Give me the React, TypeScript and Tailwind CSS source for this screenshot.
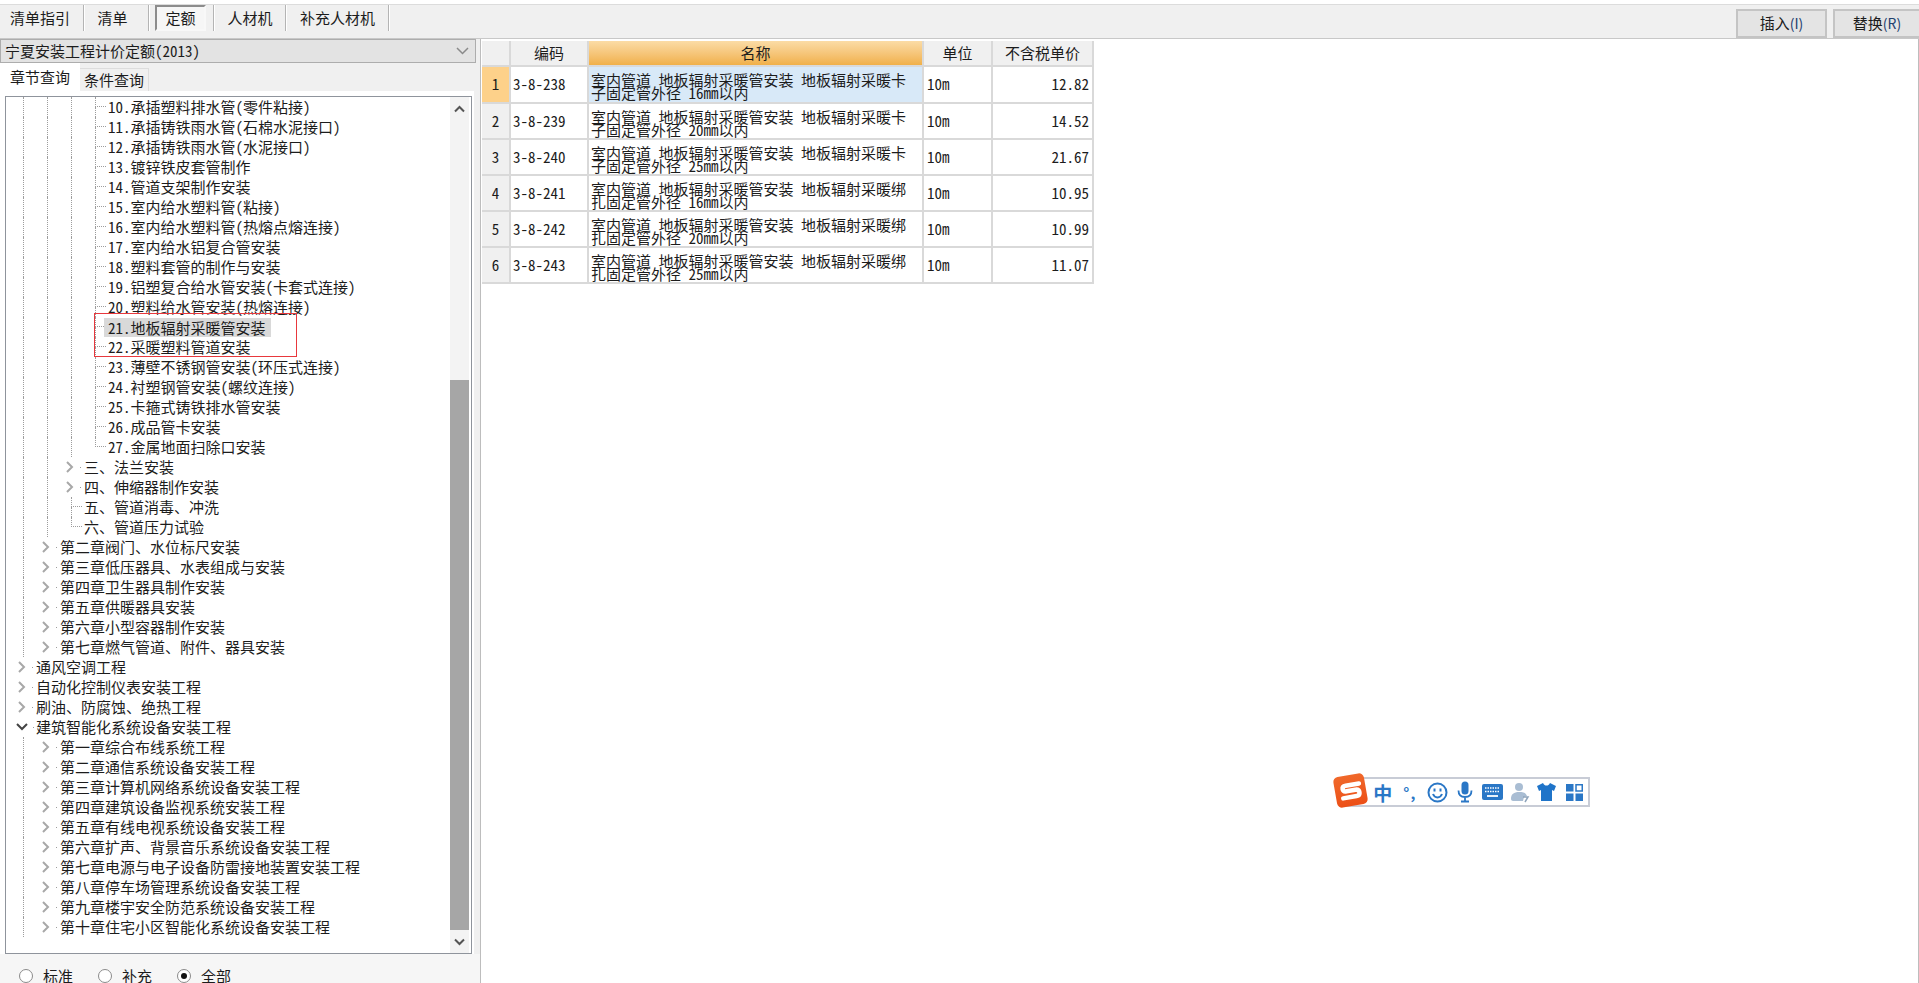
type TreeRow = {
  label: string;
  depth: number;
  kind: 'leaf' | 'closed' | 'open';
  last?: boolean;
  active?: boolean;
};

const leaf = (label: string, extra: Partial<TreeRow> = {}): TreeRow => ({ label, depth: 3, kind: 'leaf', ...extra });
const closed = (label: string, depth: number): TreeRow => ({ label, depth, kind: 'closed' });

const treeRows: TreeRow[] = [
  leaf('10.承插塑料排水管(零件粘接)'),
  leaf('11.承插铸铁雨水管(石棉水泥接口)'),
  leaf('12.承插铸铁雨水管(水泥接口)'),
  leaf('13.镀锌铁皮套管制作'),
  leaf('14.管道支架制作安装'),
  leaf('15.室内给水塑料管(粘接)'),
  leaf('16.室内给水塑料管(热熔点熔连接)'),
  leaf('17.室内给水铝复合管安装'),
  leaf('18.塑料套管的制作与安装'),
  leaf('19.铝塑复合给水管安装(卡套式连接)'),
  leaf('20.塑料给水管安装(热熔连接)'),
  leaf('21.地板辐射采暖管安装', { active: true }),
  leaf('22.采暖塑料管道安装'),
  leaf('23.薄壁不锈钢管安装(环压式连接)'),
  leaf('24.衬塑钢管安装(螺纹连接)'),
  leaf('25.卡箍式铸铁排水管安装'),
  leaf('26.成品管卡安装'),
  leaf('27.金属地面扫除口安装', { last: true }),
  closed('三、法兰安装', 2),
  closed('四、伸缩器制作安装', 2),
  { label: '五、管道消毒、冲洗', depth: 2, kind: 'leaf' },
  { label: '六、管道压力试验', depth: 2, kind: 'leaf', last: true },
  closed('第二章阀门、水位标尺安装', 1),
  closed('第三章低压器具、水表组成与安装', 1),
  closed('第四章卫生器具制作安装', 1),
  closed('第五章供暖器具安装', 1),
  closed('第六章小型容器制作安装', 1),
  closed('第七章燃气管道、附件、器具安装', 1),
  closed('通风空调工程', 0),
  closed('自动化控制仪表安装工程', 0),
  closed('刷油、防腐蚀、绝热工程', 0),
  { label: '建筑智能化系统设备安装工程', depth: 0, kind: 'open' },
  closed('第一章综合布线系统工程', 1),
  closed('第二章通信系统设备安装工程', 1),
  closed('第三章计算机网络系统设备安装工程', 1),
  closed('第四章建筑设备监视系统安装工程', 1),
  closed('第五章有线电视系统设备安装工程', 1),
  closed('第六章扩声、背景音乐系统设备安装工程', 1),
  closed('第七章电源与电子设备防雷接地装置安装工程', 1),
  closed('第八章停车场管理系统设备安装工程', 1),
  closed('第九章楼宇安全防范系统设备安装工程', 1),
  closed('第十章住宅小区智能化系统设备安装工程', 1),
];

const quotaRows = [
  { id: 1, code: '3-8-238', name: '室内管道 地板辐射采暖管安装 地板辐射采暖卡子固定管外径 16mm以内', unit: '10m', price: '12.82' },
  { id: 2, code: '3-8-239', name: '室内管道 地板辐射采暖管安装 地板辐射采暖卡子固定管外径 20mm以内', unit: '10m', price: '14.52' },
  { id: 3, code: '3-8-240', name: '室内管道 地板辐射采暖管安装 地板辐射采暖卡子固定管外径 25mm以内', unit: '10m', price: '21.67' },
  { id: 4, code: '3-8-241', name: '室内管道 地板辐射采暖管安装 地板辐射采暖绑扎固定管外径 16mm以内', unit: '10m', price: '10.95' },
  { id: 5, code: '3-8-242', name: '室内管道 地板辐射采暖管安装 地板辐射采暖绑扎固定管外径 20mm以内', unit: '10m', price: '10.99' },
  { id: 6, code: '3-8-243', name: '室内管道 地板辐射采暖管安装 地板辐射采暖绑扎固定管外径 25mm以内', unit: '10m', price: '11.07' },
];

function Separator() {
  return <div className="h-[26px] w-[2px] border-l border-[#b4b4b4] bg-white" />;
}

function ChevronRight() {
  return (
    <svg width="10" height="12" viewBox="0 0 10 12" fill="none" className="-ml-[6px] shrink-0">
      <path d="M2 1l5 5-5 5" stroke="#a8a8a8" strokeWidth="2" />
    </svg>
  );
}

function ChevronDown() {
  return (
    <svg width="12" height="8" viewBox="0 0 12 8" fill="none" className="-ml-[7px] shrink-0">
      <path d="M1 1l5 5 5-5" stroke="#444444" strokeWidth="2" />
    </svg>
  );
}

function TreeItem({ row }: { row: TreeRow }) {
  const guides = Array.from({ length: row.depth }, (_, i) => i);
  return (
    <div className="flex h-5 shrink-0 items-center whitespace-nowrap pl-[17px]">
      {guides.map((g) => (
        <div key={g} className="h-full w-6 shrink-0 border-l border-dotted border-[#9c9c9c]" />
      ))}
      {row.kind === 'leaf' ? (
        <div className="flex h-full w-[14px] shrink-0 flex-col">
          <div className="h-[10px] w-[11px] border-b border-l border-dotted border-[#9c9c9c]" />
          {!row.last && <div className="h-[10px] border-l border-dotted border-[#9c9c9c]" />}
        </div>
      ) : (
        <div className="flex h-full w-[14px] shrink-0 items-center">
          {row.kind === 'open' ? <ChevronDown /> : <ChevronRight />}
          <div className="ml-[5px] h-px w-px shrink-0 bg-[#9c9c9c]" />
        </div>
      )}
      {row.active ? (
        <span className="-ml-[5px] h-[19px] bg-[#d9d9d9] pl-[4px] pr-[5px] leading-5">{row.label}</span>
      ) : (
        <span className="-ml-px leading-5">{row.label}</span>
      )}
    </div>
  );
}

function Radio({ label, checked }: { label: string; checked?: boolean }) {
  return (
    <div className="flex items-center gap-[10px]">
      <div className="flex h-[14px] w-[14px] items-center justify-center rounded-full border border-[#8a8a8a] bg-white">
        {checked && <div className="h-[6px] w-[6px] rounded-full bg-[#111111]" />}
      </div>
      <span>{label}</span>
    </div>
  );
}

function SogouBar() {
  return (
    <div className="absolute left-[1346px] top-[777px] flex h-[30px] w-[244px] items-center border-2 border-[#c8ccd6] bg-white pl-[21px] text-[#2a77c6]">
      <div className="absolute -left-[13px] -top-[4px] flex h-[31px] w-[31px] -rotate-[10deg] items-center justify-center rounded-[5px] bg-gradient-to-b from-[#f0682a] to-[#ec4f16]">
        <svg width="24" height="20" viewBox="0 0 24 20" fill="none">
          <path d="M21 4H7.5C5 4 4 5 4 6.8S5 9.6 7.5 9.6h9C19 9.6 20 11 20 12.9S19 16 16.5 16H3" stroke="white" strokeWidth="4.5" strokeLinecap="round" />
        </svg>
      </div>
      <div className="flex w-[27.5px] justify-center text-[19px] font-bold leading-none">中</div>
      <div className="flex w-[27.5px] justify-center text-[15px] font-bold leading-none">°,</div>
      <div className="flex w-[27.5px] justify-center">
        <svg width="21" height="21" viewBox="0 0 21 21" fill="none" stroke="#2a77c6" strokeWidth="2">
          <circle cx="10.5" cy="10.5" r="9" />
          <path d="M6 12c1 2.5 3 3.5 4.5 3.5S14 14.500 15 12" />
          <path d="M7.500 6.500v3M13.500 6.500v3" />
        </svg>
      </div>
      <div className="flex w-[27.5px] justify-center">
        <svg width="16" height="22" viewBox="0 0 16 22" fill="none">
          <rect x="4.500" y="0.500" width="7" height="13" rx="3.500" fill="#2a77c6" />
          <path d="M1.500 9.500c0 4 2.500 6.500 6.500 6.500s6.500-2.500 6.500-6.500M8 16v4M4 20.500h8" stroke="#2a77c6" strokeWidth="1.800" />
        </svg>
      </div>
      <div className="flex w-[27.5px] justify-center">
        <svg width="21" height="16" viewBox="0 0 21 16">
          <rect width="21" height="16" rx="2" fill="#2a77c6" />
          <path d="M3 4h15M3 7.500h15" stroke="white" strokeWidth="1.500" strokeDasharray="1.500 1" />
          <path d="M5 12h11" stroke="white" strokeWidth="1.800" />
        </svg>
      </div>
      <div className="flex w-[27.5px] justify-center">
        <svg width="20" height="21" viewBox="0 0 20 21">
          <circle cx="9" cy="5" r="4" fill="#a9bdd3" />
          <path d="M1 17c0-5 3-7 8-7s7 1 8 4l-3 1-1 4H3c-1 0-2-1-2-2z" fill="#a9bdd3" />
          <path d="M13 15h5l-3 5" fill="none" stroke="#8fa4bb" strokeWidth="1.500" />
        </svg>
      </div>
      <div className="flex w-[27.5px] justify-center">
        <svg width="19" height="18" viewBox="0 0 19 18">
          <path d="M6 0L0 3l2 5 2-1v11h11V7l2 1 2-5-6-3c-1 2-2 2.500-3.500 2.500S7 2 6 0z" fill="#1f74c9" />
        </svg>
      </div>
      <div className="flex w-[27.5px] justify-center">
        <svg width="17" height="17" viewBox="0 0 17 17">
          <rect width="7.500" height="7.500" fill="#2a77c6" />
          <rect x="10" y="0.750" width="6.250" height="6.250" fill="none" stroke="#2a77c6" strokeWidth="1.500" />
          <rect y="9.500" width="7.500" height="7.500" fill="#2a77c6" />
          <rect x="9.500" y="9.500" width="7.500" height="7.500" fill="#2a77c6" />
        </svg>
      </div>
    </div>
  );
}

export default function App() {
  return (
    <div className="relative flex h-[983px] w-[1919px] flex-col overflow-hidden bg-[#f0f0f0] font-['Noto_Sans_CJK_SC',sans-serif] text-[15px] text-[#1c1c1c] [font-feature-settings:'hwid']">
      <div className="h-[5px] shrink-0 border-b border-[#dcdcdc] bg-white" />

      {/* top toolbar */}
      <div className="flex h-[33px] shrink-0 items-start">
        <div className="flex h-[26px] w-[83px] items-center justify-center pr-[3px]">清单指引</div>
        <Separator />
        <div className="flex h-[26px] w-[63px] items-center justify-center pr-[8px]">清单</div>
        <Separator />
        <div className="ml-[5px] mr-[7px] flex h-[26px] w-[51px] items-center justify-center border-2 border-b-[#f8f8f8] border-l-[#8c8c8c] border-r-[#f8f8f8] border-t-[#8c8c8c] bg-[#f6f6f6]">
          定额
        </div>
        <Separator />
        <div className="flex h-[26px] w-[70px] items-center justify-center">人材机</div>
        <Separator />
        <div className="flex h-[26px] w-[101px] items-center justify-center">补充人材机</div>
        <Separator />
        <div className="ml-auto flex gap-[6px] pt-[4px]">
          <button className="flex h-[29px] w-[91px] items-center justify-center border-2 border-[#c4c4c4] bg-[#e4e4e4]">
            插入<span className="text-[14px] text-[#23406f] [font-feature-settings:normal]">(I)</span>
          </button>
          <button className="flex h-[29px] w-[86px] items-center justify-center border-2 border-r-0 border-[#c4c4c4] bg-[#e4e4e4]">
            替换<span className="text-[14px] text-[#23406f] [font-feature-settings:normal]">(R)</span>
          </button>
        </div>
      </div>

      <div className="flex min-h-0 flex-1 border-t border-[#c8c8c8]">
        {/* left panel */}
        <div className="flex w-[480px] shrink-0 flex-col">
          <div className="flex h-[24px] w-[476px] shrink-0 items-center justify-between border border-[#adadad] bg-[#e3e3e3] pl-[4px] pr-[6px]">
            <span>宁夏安装工程计价定额(2013)</span>
            <svg width="13" height="8" viewBox="0 0 13 8" fill="none">
              <path d="M1 1l5.500 5.500L12 1" stroke="#8a8a8a" strokeWidth="1.500" />
            </svg>
          </div>

          <div className="flex h-[28px] shrink-0 items-end">
            <div className="flex h-[28px] w-[80px] items-center justify-center bg-white">章节查询</div>
            <div className="flex h-[23px] w-[69px] items-center justify-center border-r border-t border-[#dddddd] bg-[#f0f0f0]">条件查询</div>
          </div>

          <div className="w-[474px] shrink-0 bg-white pl-[5px] pr-[2px] pt-[5px]">
            <div className="relative flex h-[858px] overflow-hidden border border-[#8f949c]">
              <div className="flex min-w-0 flex-1 flex-col">
                {treeRows.map((row) => (
                  <TreeItem key={row.label} row={row} />
                ))}
              </div>
              <div className="mr-[2px] flex w-[19px] shrink-0 flex-col bg-[#f3f3f3]">
                <div className="flex h-[24px] items-center justify-center">
                  <svg width="11" height="8" viewBox="0 0 11 8" fill="none">
                    <path d="M1 6.500l4.500-4.500 4.500 4.500" stroke="#555555" strokeWidth="2" />
                  </svg>
                </div>
                <div className="flex-1" />
                <div className="h-[550px] bg-[#a6a6a6]" />
                <div className="flex h-[23px] items-center justify-center">
                  <svg width="11" height="8" viewBox="0 0 11 8" fill="none">
                    <path d="M1 1.500l4.500 4.500 4.500-4.500" stroke="#555555" strokeWidth="2" />
                  </svg>
                </div>
              </div>
              {/* red mark over rows 21 and 22 */}
              <div className="absolute left-[88px] top-[216px] h-[44px] w-[203px] border border-[#e8383d]" />
            </div>
          </div>

          <div className="flex flex-1 items-start gap-[25px] bg-[#f6f6f6] pl-[19px] pt-[11px]">
            <Radio label="标准" />
            <Radio label="补充" />
            <Radio label="全部" checked />
          </div>
        </div>

        {/* right panel */}
        <div className="min-w-0 flex-1 border-l border-r border-[#bdbdbd] bg-white pl-px pt-[2px]">
          <div className="grid w-[612px] grid-cols-[29px_78px_335px_69px_101px] grid-rows-[26px_37px_repeat(5,36px)]">
            <div className="border-b-2 border-r-2 border-[#d9d9d9] bg-[#f0f0f0]" />
            <div className="flex items-center justify-center border-b-2 border-r-2 border-[#d9d9d9] bg-[#f0f0f0]">编码</div>
            <div className="flex items-center justify-center border-b-2 border-r-2 border-[#d9d9d9] bg-gradient-to-b from-[#fbdca6] to-[#f0b048]">名称</div>
            <div className="flex items-center justify-center border-b-2 border-r-2 border-[#d9d9d9] bg-[#f0f0f0]">单位</div>
            <div className="flex items-center justify-center border-b-2 border-r-2 border-[#d9d9d9] bg-[#f0f0f0]">不含税单价</div>
            {quotaRows.map((row) => (
              <div key={row.id} className="contents">
                <div className={`flex items-center justify-center border-b-2 border-r-2 border-[#d9d9d9] ${row.id === 1 ? 'bg-[#fdd18a]' : 'bg-[#f0f0f0]'}`}>{row.id}</div>
                <div className="flex items-center border-b-2 border-r-2 border-[#d9d9d9] pl-[2px]">{row.code}</div>
                <div className={`flex items-center border-b-2 border-r-2 border-[#d9d9d9] pl-[2px] pr-[10px] pt-[3px] leading-[13px] ${row.id === 1 ? 'bg-[#d8e9f8]' : ''}`}>
                  <span>{row.name}</span>
                </div>
                <div className="flex items-center border-b-2 border-r-2 border-[#d9d9d9] pl-[3px]">{row.unit}</div>
                <div className="flex items-center justify-end border-b-2 border-r-2 border-[#d9d9d9] pr-[3px]">{row.price}</div>
              </div>
            ))}
          </div>
        </div>
      </div>

      <SogouBar />
    </div>
  );
}
